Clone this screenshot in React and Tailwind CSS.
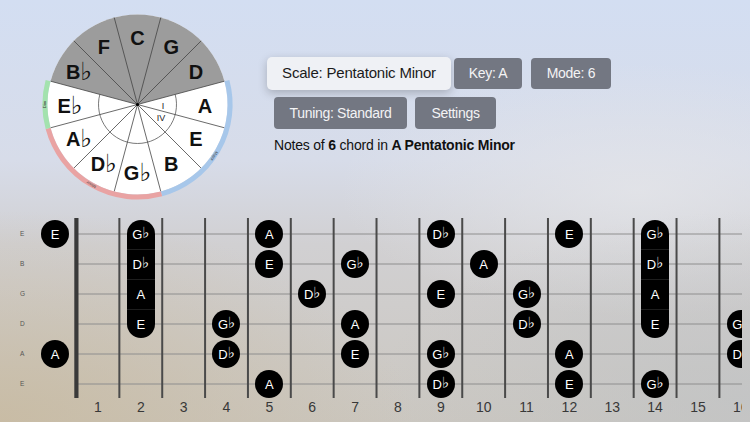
import React from "react";

const F = 42.86;
const CX = 100.5;
const CY = 100.5;

const pt = (r, deg) => {
  const a = (deg * Math.PI) / 180;
  return [CX + r * Math.cos(a), CY + r * Math.sin(a)];
};
const arc = (r, a1, a2) => {
  const [x1, y1] = pt(r, a1);
  const [x2, y2] = pt(r, a2);
  const large = a2 - a1 > 180 ? 1 : 0;
  return `M${x1} ${y1} A${r} ${r} 0 ${large} 1 ${x2} ${y2}`;
};

const circleNotes = [
  ["A", 0],
  ["E", 30],
  ["B", 60],
  ["G♭", 90],
  ["D♭", 120],
  ["A♭", 150],
  ["E♭", 180],
  ["B♭", 210],
  ["F", 240],
  ["C", 270],
  ["G", 300],
  ["D", 330],
];

function CircleOfFifths() {
  const [gx1, gy1] = pt(90, 195);
  const [gx2, gy2] = pt(90, 345);
  const labelAt = (txt, deg, r, rot) => {
    const [x, y] = pt(r, deg);
    return (
      <text
        x={x}
        y={y}
        fontSize="4.2"
        fill="#3a3a3a"
        textAnchor="middle"
        dominantBaseline="central"
        fontFamily="Liberation Sans, sans-serif"
        transform={`rotate(${rot} ${x} ${y})`}
      >
        {txt}
      </text>
    );
  };
  return (
    <svg width="200" height="200" viewBox="0 0 200 200" className="ml-[37px] mt-[4px] shrink-0">
      <circle cx={CX} cy={CY} r="90" fill="#ffffff" />
      <path d={`M${CX} ${CY} L${gx1} ${gy1} A90 90 0 0 1 ${gx2} ${gy2} Z`} fill="#9c9c9c" />
      <path d={arc(39, -15, 195)} fill="none" stroke="#555" strokeWidth="0.8" />
      {Array.from({ length: 12 }).map((_, i) => {
        const [x, y] = pt(90, 15 + 30 * i);
        return <line key={i} x1={CX} y1={CY} x2={x} y2={y} stroke="#444" strokeWidth="0.8" />;
      })}
      <circle cx={CX} cy={CY} r="1.6" fill="#000" />
      <path d={arc(92.6, -15, 75)} fill="none" stroke="#a7c7ea" strokeWidth="5" />
      <path d={arc(92.6, 75, 165)} fill="none" stroke="#e9a3a3" strokeWidth="5" />
      <path d={arc(92.6, 165, 195)} fill="none" stroke="#a3e2ae" strokeWidth="5" />
      {labelAt("Major", 34, 92.6, 124)}
      {labelAt("Minor", 120, 92.6, 210)}
      {labelAt("Dim", 180, 92.6, 270)}
      {circleNotes.map(([n, deg]) => {
        const [x, y] = pt(67.5, deg);
        const letter = n[0];
        const flat = n.length > 1;
        return (
          <text
            key={n}
            x={x}
            y={y + 1}
            textAnchor="middle"
            dominantBaseline="central"
            fontSize="20"
            fontWeight="700"
            fill="#111"
            fontFamily="Liberation Sans, sans-serif"
          >
            {letter}
            {flat && (
              <tspan fontSize="25" fontFamily="DejaVu Sans, sans-serif" fontWeight="700" dy="-1">
                ♭
              </tspan>
            )}
          </text>
        );
      })}
      <text x={CX + 25.5} y={CY + 1.5} fontSize="9" fill="#222" textAnchor="middle" dominantBaseline="central" fontFamily="Liberation Sans, sans-serif">
        I
      </text>
      <text x={CX + 23.5} y={CY + 13.5} fontSize="9" fill="#222" textAnchor="middle" dominantBaseline="central" fontFamily="Liberation Sans, sans-serif">
        IV
      </text>
    </svg>
  );
}

function NoteLabel({ n }) {
  const letter = n[0];
  const flat = n.length > 1;
  return (
    <span className="flex items-center text-white text-[13px] leading-none font-['Liberation_Sans',sans-serif]">
      {letter}
      {flat && <span className="text-[15px] leading-none font-['DejaVu_Sans',sans-serif] relative -top-[1px]">♭</span>}
    </span>
  );
}

const notes = [
  [0, 0, "E"], [0, 5, "A"], [0, 9, "D♭"], [0, 12, "E"],
  [1, 5, "E"], [1, 7, "G♭"], [1, 10, "A"],
  [2, 6, "D♭"], [2, 9, "E"], [2, 11, "G♭"],
  [3, 4, "G♭"], [3, 7, "A"], [3, 11, "D♭"], [3, 16, "G♭"],
  [4, 0, "A"], [4, 4, "D♭"], [4, 7, "E"], [4, 9, "G♭"], [4, 12, "A"], [4, 16, "D♭"],
  [5, 5, "A"], [5, 9, "D♭"], [5, 12, "E"], [5, 14, "G♭"],
];
const pills = [2, 14];
const pillNotes = ["G♭", "D♭", "A", "E"];
const stringNames = ["E", "B", "G", "D", "A", "E"];

function Fretboard() {
  return (
    <div className="relative w-[742px] h-[212px] overflow-hidden">
      <svg className="absolute inset-0" width="742" height="212">
        {stringNames.map((_, k) => (
          <line key={k} x1="78" x2="742" y1={24 + 30 * k} y2={24 + 30 * k} stroke="#8e8e8e" strokeWidth="1" />
        ))}
        <rect x="74.3" y="8" width="4.2" height="180" fill="#3a3a3a" />
        {Array.from({ length: 16 }).map((_, i) => (
          <rect key={i} x={76.5 + F * (i + 1) - 1} y="8" width="2" height="180" fill="#4a4a4a" />
        ))}
      </svg>
      <div className="relative flex mt-[9px]">
        <div className="w-[33.64px] shrink-0 flex flex-col">
          {stringNames.map((s, k) => (
            <div key={k} className="h-[30px] flex items-center pl-[20px] text-[6.5px] text-[#555] font-['Liberation_Sans',sans-serif]">
              {s}
            </div>
          ))}
        </div>
        <div className="grid grid-cols-[repeat(17,42.86px)] grid-rows-[repeat(6,30px)] shrink-0">
          {notes.map(([s, f, n]) => (
            <div key={`${s}-${f}`} className="flex items-center justify-center" style={{ gridRow: s + 1, gridColumn: f + 1 }}>
              <div className="w-[28px] h-[28px] rounded-full bg-black flex items-center justify-center">
                <NoteLabel n={n} />
              </div>
            </div>
          ))}
          {pills.map((f) => (
            <div key={f} className="flex items-center justify-center" style={{ gridRow: "1 / span 4", gridColumn: f + 1 }}>
              <div className="w-[28px] h-[118px] rounded-full bg-black flex flex-col overflow-hidden">
                <div className="h-[29px] flex items-center justify-center"><NoteLabel n={pillNotes[0]} /></div>
                <div className="h-[30px] flex items-center justify-center border-t border-[#1e1e1e]"><NoteLabel n={pillNotes[1]} /></div>
                <div className="h-[30px] flex items-center justify-center border-t border-[#1e1e1e]"><NoteLabel n={pillNotes[2]} /></div>
                <div className="h-[29px] flex items-center justify-center border-t border-[#1e1e1e]"><NoteLabel n={pillNotes[3]} /></div>
              </div>
            </div>
          ))}
        </div>
      </div>
      <div className="relative flex h-[16px] ml-[76.5px]">
        {Array.from({ length: 16 }).map((_, i) => (
          <div key={i} className="w-[42.86px] shrink-0 flex items-center justify-center text-[14px] leading-none text-[#383838] font-['Liberation_Sans',sans-serif]">
            {i + 1}
          </div>
        ))}
      </div>
    </div>
  );
}

const grayBtn =
  "flex items-center justify-center rounded-[4px] bg-[#737782] text-[#f3f3f5] text-[14px] tracking-[-0.3px] shrink-0";

export default function App() {
  return (
    <div className="w-[750px] h-[422px] overflow-hidden font-['Liberation_Sans',sans-serif] bg-[radial-gradient(ellipse_55%_50%_at_0%_100%,rgba(200,186,160,0.85),rgba(200,186,160,0)),radial-gradient(ellipse_50%_45%_at_100%_95%,rgba(192,195,198,0.7),rgba(192,195,198,0)),radial-gradient(ellipse_40%_30%_at_85%_45%,rgba(228,229,233,0.8),rgba(228,229,233,0)),linear-gradient(180deg,#d3def2_0%,#d7dce9_38%,#d1d0d2_58%,#cbc7c0_100%)]">
      <div className="flex items-start h-[210px]">
        <CircleOfFifths />
        <div className="ml-[37px] pt-[57px] flex flex-col">
          <div className="flex items-center">
            <div className="-ml-[7px] w-[184px] h-[33px] rounded-[5px] bg-[#eff1f5] shadow-[0_3px_10px_rgba(0,0,0,0.22)] flex items-center justify-center text-[15px] tracking-[-0.2px] text-[#1b1b1b] shrink-0">
              Scale: Pentatonic Minor
            </div>
            <div className={`ml-[3px] w-[68px] h-[31px] ${grayBtn}`}>Key: A</div>
            <div className={`ml-[9px] w-[80px] h-[31px] ${grayBtn}`}>Mode: 6</div>
          </div>
          <div className="flex gap-[8px] mt-[7px]">
            <div className={`w-[133px] h-[32px] ${grayBtn}`}>Tuning: Standard</div>
            <div className={`w-[81px] h-[32px] ${grayBtn}`}>Settings</div>
          </div>
          <div className="mt-[8px] text-[14px] leading-[17px] tracking-[-0.2px] text-[#111] whitespace-nowrap">
            Notes of <b>6</b> chord in <b>A Pentatonic Minor</b>
          </div>
        </div>
      </div>
      <Fretboard />
    </div>
  );
}
